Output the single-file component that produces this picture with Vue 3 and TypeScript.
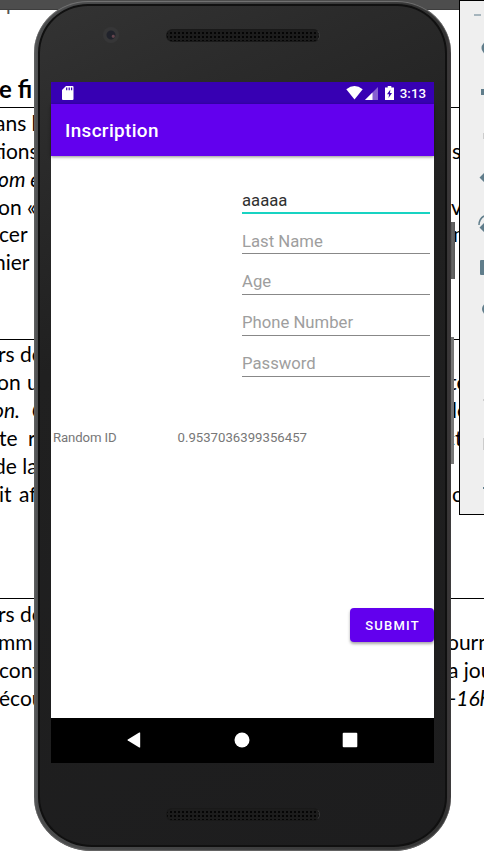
<script setup lang="ts">
import { reactive, ref } from 'vue'

interface Line {
  text: string
  x: number
  gap?: number
  italic?: boolean
}
interface Field {
  label: string
  value: string
  kind: string
}

const intro: Line[] = [
  { text: 'ans l', x: -5, gap: 0 },
  { text: 'tions', x: -7 },
  { text: 'om e', x: -2, gap: 0, italic: true },
  { text: 'on «', x: -2, gap: 0 },
  { text: 'cer', x: -1 },
  { text: 'nier', x: -6 },
]
const middle: Line[] = [
  { text: 'rs de', x: -2, gap: 0 },
  { text: 'on u', x: -3, gap: 1 },
  { text: 'on. C', x: -7, gap: 7, italic: true },
  { text: 'te r', x: -1, gap: 5 },
  { text: 'de la', x: -6, gap: 0 },
  { text: 'it af', x: -1, gap: 2 },
]
const last: Line[] = [
  { text: 'rs de', x: -2, gap: 0 },
  { text: 'mm', x: -2 },
  { text: 'cont', x: -1 },
  { text: 'écou', x: -1 },
]
const introRight: Line[] = [
  { text: '', x: 0 },
  { text: 's', x: 0 },
  { text: '', x: 0 },
  { text: 'v', x: -1 },
  { text: 'm', x: 1 },
]
const middleRight: Line[] = [
  { text: '', x: 0 },
  { text: 'te', x: -3 },
  { text: 'le', x: 0 },
  { text: 'ct', x: -7 },
  { text: '', x: 0 },
  { text: 'o', x: 0 },
]
const lastRight: Line[] = [
  { text: '', x: 0 },
  { text: 'ourn', x: -5 },
  { text: 'a jou', x: -4, gap: 0 },
  { text: '-16h', x: -3, italic: true },
]
const sections = [
  { name: 'intro', left: intro, right: introRight },
  { name: 'middle', left: middle, right: middleRight },
  { name: 'last', left: last, right: lastRight },
]
const lineStyle = (l: Line) => ({ marginLeft: l.x + 'px', wordSpacing: (l.gap ?? 0) + 'px' })

const fields = reactive<Field[]>([
  { label: 'First Name', value: 'aaaaa', kind: 'text' },
  { label: 'Last Name', value: '', kind: 'text' },
  { label: 'Age', value: '', kind: 'text' },
  { label: 'Phone Number', value: '', kind: 'tel' },
  { label: 'Password', value: '', kind: 'password' },
])
const active = ref(0)
const randomId = '0.9537036399356457'
</script>

<template>
  <div class="desktop">
    <div class="document">
      <div class="ribbon"></div>
      <div class="heading">
        <div class="cutoff"><p>que</p></div>
        <h2>e fi</h2>
      </div>
      <section v-for="s in sections" :key="s.name" :class="s.name">
        <div class="column">
          <p v-for="(l, i) in s.left" :key="i" :class="{ italic: l.italic }" :style="lineStyle(l)">{{ l.text }}</p>
        </div>
        <div class="column">
          <p v-for="(l, i) in s.right" :key="i" :class="{ italic: l.italic }" :style="lineStyle(l)">{{ l.text }}</p>
        </div>
      </section>
    </div>

    <svg class="toolbar" viewBox="0 0 25 515" width="25" height="515">
      <rect x="0" y="0" width="25" height="515" fill="#000" />
      <rect x="1" y="1" width="24" height="513" fill="#efefef" />
      <path d="M15 15h7" stroke="#a6b5bd" stroke-width="2" />
      <g fill="#607d8b">
        <circle cx="29" cy="48" r="6.5" />
        <path d="M22 89h3v6h-3zM20.5 177.5l4.5-4.5v9zM20.5 227.5l4.5-4.5v9zM22 260h3v15h-3q-1 0-1-1v-13q0-1 1-1z" />
        <circle cx="29" cy="309" r="6" />
        <path d="M24 487h1v2h-1z" />
      </g>
      <path d="M20 225q0-6 5-9" fill="none" stroke="#607d8b" stroke-width="1.5" />
      <path d="M24.5 133v6M24.5 399v2M24.5 438v12" stroke="#ccc" />
    </svg>

    <div class="key power"></div>
    <div class="key volume"></div>
    <div class="phone">
      <div class="body">
        <div class="forehead">
          <i class="camera"></i>
          <i class="speaker"></i>
        </div>
        <div class="screen">
          <header class="status">
            <svg class="sd" viewBox="0 0 12 14" width="12" height="14">
              <path d="M4 0h6.5Q11.5 0 11.5 1v12q0 1-1 1H1q-1 0-1-1V4z" fill="#fff" />
              <path d="M4.7 1.5v2.7M7.2 1.5v2.7M9.6 1.5v2.7" stroke="#3700b3" stroke-width="1.2" />
            </svg>
            <svg class="wifi" viewBox="0 0 17 14" width="17" height="14">
              <path d="M.3 3.2Q8.5-3 16.7 3.2L8.5 13.5z" fill="#fff" />
            </svg>
            <svg class="signal" viewBox="0 0 13 13" width="13" height="13">
              <path d="M13 0v13H0z" fill="#8660d1" />
              <path d="M7.5 5.5V13H0z" fill="#fff" />
            </svg>
            <svg class="battery" viewBox="0 0 9 14" width="9" height="14">
              <path d="M2.7 0h3.6v1.5H9V14H0V1.5h2.7z" fill="#fff" />
              <path d="M5.4 3.5 2 8.2h2.1L3.5 12 7 7H5z" fill="#3700b3" />
            </svg>
            <span>3:13</span>
          </header>
          <div class="appbar">Inscription</div>
          <main>
            <form @submit.prevent>
              <div class="fields">
                <input
                  v-for="(f, i) in fields"
                  :key="f.label"
                  v-model="f.value"
                  :type="f.kind"
                  :placeholder="f.label"
                  :class="{ active: active === i }"
                  @focus="active = i"
                />
              </div>
              <div class="random">
                <span>Random ID</span>
                <span>{{ randomId }}</span>
              </div>
              <button type="submit">SUBMIT</button>
            </form>
          </main>
          <nav>
            <svg viewBox="0 0 14 16" width="14" height="16">
              <path d="M13.2 .7v14.6Q13 15.8 12.2 15.4L.8 8.6Q0 8 .8 7.4L12.2 .6Q13 .2 13.2 .7z" fill="#fff" />
            </svg>
            <svg viewBox="0 0 16 16" width="16" height="16"><circle cx="8" cy="8" r="7.5" fill="#fff" /></svg>
            <svg viewBox="0 0 16 16" width="16" height="16">
              <rect x=".7" y=".8" width="14.6" height="14.4" rx="1" fill="#fff" />
            </svg>
          </nav>
        </div>
        <div class="chin"><i class="speaker"></i></div>
      </div>
    </div>
  </div>
</template>

<style>
body {
  margin: 0;
  background: #fff;
}
</style>

<style scoped>
.desktop {
  position: relative;
  width: 484px;
  height: 863px;
  overflow: hidden;
  background: #fff;
  box-sizing: border-box;
}
.desktop * {
  box-sizing: border-box;
}
.document {
  font-family: Lato, sans-serif;
  font-size: 21px;
  color: #000;
  white-space: nowrap;
}
.ribbon {
  height: 10px;
  background: #4d4d4d;
  border-bottom: 1px solid #3e3e3e;
}
.heading {
  height: 97px;
  overflow: hidden;
}
.cutoff {
  height: 5px;
  overflow: hidden;
  color: #555;
}
.cutoff p {
  margin: -22px 0 0 -1px;
}
h2 {
  margin: 60px 0 0 -1px;
  font-size: 24px;
  line-height: 28px;
  font-weight: 700;
}
section {
  display: grid;
  grid-template-columns: 452px 32px;
  border-top: 1px solid #000;
  overflow: hidden;
}
.intro {
  height: 232px;
  padding-top: 1px;
}
.middle {
  height: 259px;
}
.last {
  height: 265px;
  padding-top: 1px;
}
p {
  margin: 0;
  height: 28px;
  line-height: 28px;
}
.intro p {
  height: 27.85px;
}
.italic {
  font-style: italic;
}
.toolbar {
  position: absolute;
  left: 459px;
  top: 0;
}
.key {
  position: absolute;
  background: linear-gradient(90deg, #444, #666 60%, #555);
}
.power {
  left: 449px;
  top: 222px;
  width: 6px;
  height: 57px;
}
.volume {
  left: 449px;
  top: 337px;
  width: 5px;
  height: 127px;
  background: #777;
}
.phone {
  position: absolute;
  left: 34px;
  top: 1px;
  width: 417px;
  height: 850px;
  padding: 3px 4px 4px 4px;
  border-radius: 54px 54px 58px 58px / 52px 52px 54px 54px;
  background: linear-gradient(90deg, #5c5e5f, #4b4c4d 4px, #333 412px, #3b3839 415px, #302e2f);
  box-shadow: inset 0 1px 1px #777, inset 0 -1px 1px #666;
}
.body {
  height: 100%;
  padding: 0 11px;
  border: 2px solid #101010;
  border-radius: 50px 50px 54px 54px / 49px 49px 50px 50px;
  background: linear-gradient(155deg, #333 0, #2b2b2b 14%, #202020 36%, #1d1d1e 100%);
}
.forehead {
  position: relative;
  height: 76px;
  margin: 0 -1px;
}
.camera {
  position: absolute;
  left: 53px;
  top: 21px;
  width: 16px;
  height: 16px;
  border-radius: 50%;
  background: radial-gradient(circle at 64% 58%, #66454d 0 1px, transparent 2px), radial-gradient(circle, #20222b 0 4px, #363637 5px);
}
.speaker {
  position: absolute;
  left: 116px;
  top: 23px;
  width: 154px;
  height: 13px;
  border-radius: 7px;
  background: radial-gradient(circle, #050505 0 1px, transparent 1.3px) 2px 1px / 4px 4px, #1c1c1c;
  border: 1px solid #191919;
  border-right-color: #3b3b3b;
}
.screen {
  width: 383px;
  height: 681px;
  display: flex;
  flex-direction: column;
  background: #fff;
  font-family: Roboto, sans-serif;
}
.status {
  height: 22px;
  padding: 0 8px 0 11px;
  display: flex;
  align-items: center;
  background: #3700b3;
  color: #fff;
  font-size: 13.3px;
  font-weight: 500;
}
.sd {
  margin-right: auto;
}
.signal {
  margin-left: 2px;
}
.battery {
  margin: 0 6px 0 7px;
}
.appbar {
  height: 52px;
  padding-left: 14px;
  line-height: 54px;
  background: #6200ee;
  color: #fff;
  font-size: 18.9px;
  font-weight: 500;
  letter-spacing: 0.35px;
  box-shadow: 0 1px 3px rgba(0, 0, 0, 0.45);
}
main {
  flex: 1;
}
form {
  display: flex;
  flex-direction: column;
}
.fields {
  width: 188px;
  margin: 17px 0 0 191px;
  display: flex;
  flex-direction: column;
}
input {
  height: 41px;
  width: 188px;
  padding: 15px 0 0;
  border: 0;
  border-bottom: 1px solid #888;
  outline: 0;
  background: none;
  color: #303030;
  font: 16.7px Roboto, sans-serif;
}
input::placeholder {
  color: #9e9e9e;
  opacity: 1;
}
input.active {
  border-bottom: 2px solid #18d3c2;
  padding-top: 15px;
}
input.active + input {
  height: 40px;
}
.random {
  display: grid;
  grid-template-columns: 124.5px 1fr;
  padding-left: 2px;
  margin-top: 51px;
  height: 20px;
  line-height: 20px;
  color: #777;
  font-size: 13.2px;
}
.random span:first-child {
  letter-spacing: -0.12px;
}
button {
  align-self: flex-end;
  width: 84px;
  height: 34px;
  margin-top: 160px;
  padding: 0 0 0 1px;
  border: 0;
  border-radius: 4px;
  background: #6200ee;
  color: #fff;
  font: 500 13px Roboto, sans-serif;
  letter-spacing: 1.2px;
  box-shadow: 0 2px 3px rgba(0, 0, 0, 0.35);
}
nav {
  height: 45px;
  padding: 0 76px 1px;
  display: flex;
  align-items: center;
  justify-content: space-between;
  background: #000;
}
.chin {
  position: relative;
  margin: 0 -1px;
}
.chin .speaker {
  top: 45px;
}
</style>
